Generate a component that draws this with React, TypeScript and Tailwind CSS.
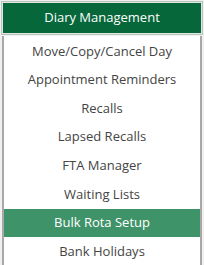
import React from "react";

const items = [
  "Move/Copy/Cancel Day",
  "Appointment Reminders",
  "Recalls",
  "Lapsed Recalls",
  "FTA Manager",
  "Waiting Lists",
  "Bulk Rota Setup",
  "Bank Holidays",
];

export default function App() {
  return (
    <div
      className="w-[204px] h-[265px] bg-[#f0f0f0] overflow-hidden flex flex-col"
      style={{ fontFamily: '"Open Sans", "Noto Sans", sans-serif' }}
    >
      <div className="mx-[1px] mt-[1px] border border-[#b8c4bc] p-[1px] bg-[#dfe5e1]">
        <div className="h-[30px] bg-[#06673a] flex items-center justify-center text-white text-[13px]">
          Diary Management
        </div>
      </div>
      <div className="mx-[2px] mt-[1px] flex-1 bg-white border-l-2 border-r-2 border-[#a8a8a8] pt-[1px]">
        {items.map((it) => (
          <div
            key={it}
            className={
              it === "Bulk Rota Setup"
                ? "h-[28.6px] flex items-center justify-center text-[13px] bg-[#3f9368] text-white"
                : "h-[28.6px] flex items-center justify-center text-[13px] text-[#444444]"
            }
          >
            {it}
          </div>
        ))}
      </div>
    </div>
  );
}
